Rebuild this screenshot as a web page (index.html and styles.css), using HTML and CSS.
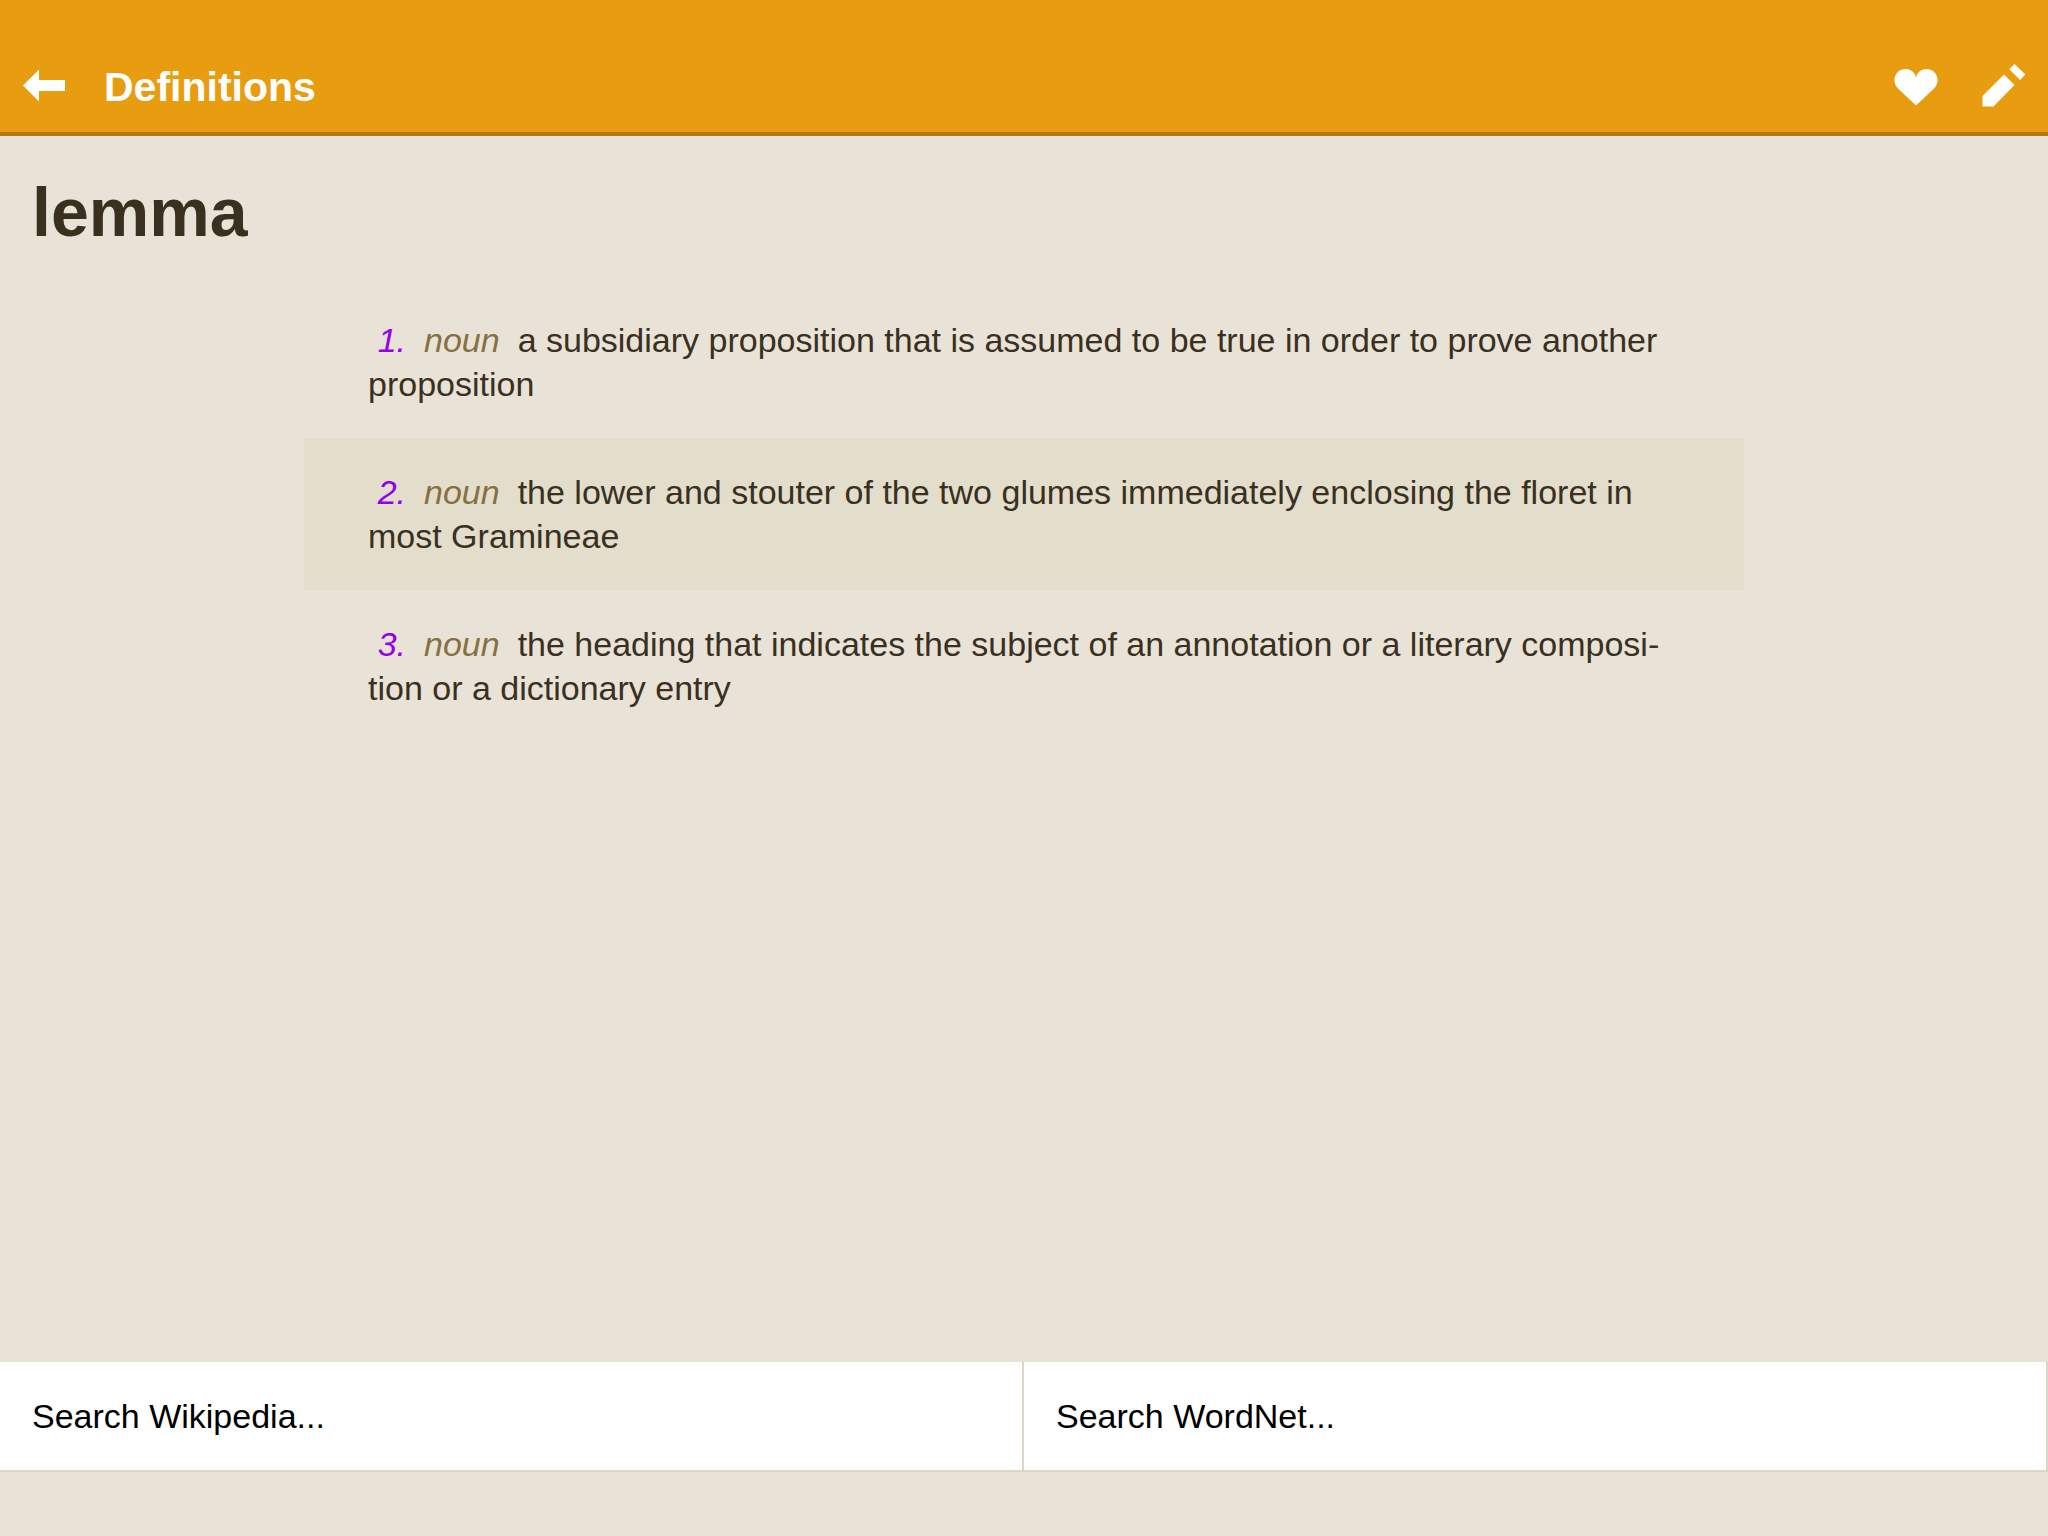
FILE: index.html
```html
<!DOCTYPE html>
<html lang="en">
<head>
<meta charset="utf-8">
<meta name="viewport" content="width=device-width, initial-scale=1">
<title>Definitions</title>
<link rel="stylesheet" href="styles.css">
</head>
<body class="page">
<header class="toolbar">
  <button class="tool" type="button" aria-label="Back">
    <svg class="icon" viewBox="0 0 88 92" aria-hidden="true"><path d="M23 45.500 39 29.500V40H65V51H39V61.500Z"/></svg>
  </button>
  <h1 class="title">Definitions</h1>
  <button class="tool" type="button" aria-label="Favorite">
    <svg class="icon" viewBox="0 0 88 92" aria-hidden="true"><path d="M44 65.500 26 48.500C23.500 46 22.500 43 22.500 40C22.500 33.500 27.500 29 33.500 29C39 29 43.200 32.500 44 38C44.800 32.500 49 29 54.500 29C60.500 29 65.500 33.500 65.500 40C65.500 43 64.500 46 62 48.500Z"/></svg>
  </button>
  <button class="tool" type="button" aria-label="Edit">
    <svg class="icon" viewBox="0 0 88 92" aria-hidden="true"><path d="M22.500 56 44 34.500 54.500 45 33.500 66.500H22.500ZM54.500 24 65.300 34.500 60 40 49.300 29.300Z"/></svg>
  </button>
</header>
<main class="content">
  <h2 class="headword">lemma</h2>
  <ol class="senses">
    <li class="sense"><span class="number">1.</span><i class="pos">noun</i>a subsidiary proposition that is assumed to be true in order to prove another proposition</li>
    <li class="sense"><span class="number">2.</span><i class="pos">noun</i>the lower and stouter of the two glumes immediately enclosing the floret in most Gramineae</li>
    <li class="sense"><span class="number">3.</span><i class="pos">noun</i>the heading that indicates the subject of an annotation or a literary composi&shy;tion or a dictionary entry</li>
  </ol>
</main>
<nav class="lookups">
  <a class="lookup" href="#wikipedia">Search Wikipedia...</a>
  <a class="lookup" href="#wordnet">Search WordNet...</a>
</nav>
</body>
</html>
```
FILE: styles.css
```css
* {
  box-sizing: border-box;
}

.page {
  display: flex;
  flex-direction: column;
  min-height: 100vh;
  margin: 0;
  padding-bottom: 64px;
  background: #e9e2d7;
  color: #39301f;
  font: 34px/44px "Liberation Sans", Arial, sans-serif;
}

.toolbar {
  display: flex;
  align-items: center;
  padding-top: 40px;
  border-bottom: 4px solid #b0780e;
  background: #e89c10;
  color: #fff;
}

.title {
  flex: 1;
  margin: 0;
  padding: 2px 16px 0;
  font-size: 41px;
  line-height: 48px;
}

.tool {
  width: 88px;
  height: 92px;
  padding: 0;
  border: 0;
  background: none;
  color: inherit;
}

.icon {
  display: block;
  width: 100%;
  height: 100%;
  fill: currentColor;
}

.content {
  flex: 1;
}

.headword {
  margin: 0;
  padding: 36px 32px 34px;
  font-size: 68px;
  line-height: 80px;
}

.senses {
  max-width: 1440px;
  margin: 0 auto;
  padding: 0;
  list-style: none;
}

.sense {
  padding: 32px 64px;
}

.sense:nth-child(even) {
  background: #e3ddcc;
}

.number {
  display: inline-block;
  width: 38px;
  margin-right: 18px;
  color: #9600e6;
  font-style: italic;
  text-align: right;
}

.pos {
  margin-right: 18px;
  color: #86703f;
}

.lookups {
  display: grid;
  grid-template-columns: 1fr 1fr;
}

.lookup {
  padding: 32px;
  border-right: 2px solid #ddd5c2;
  border-bottom: 2px solid #ddd5c2;
  background: #fff;
  color: #000;
  text-decoration: none;
}
```
